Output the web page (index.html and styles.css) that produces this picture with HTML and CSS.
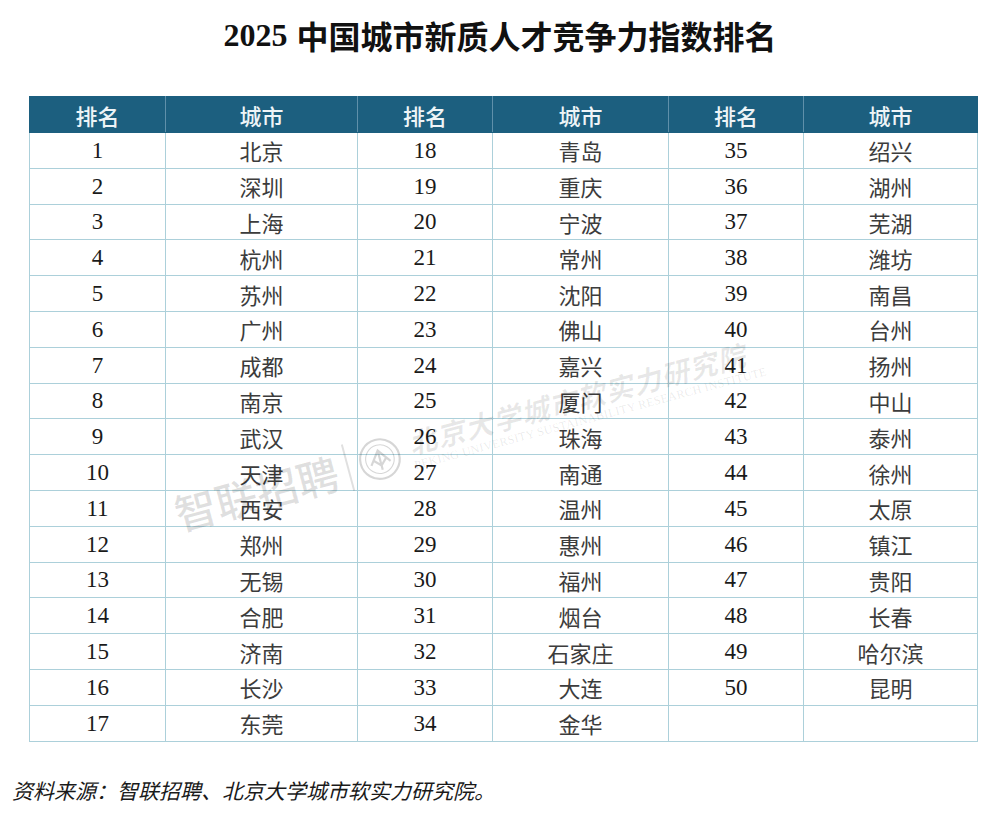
FILE: index.html
```html
<!DOCTYPE html>
<html lang="zh-CN">
<head>
<meta charset="utf-8">
<title>2025 中国城市新质人才竞争力指数排名</title>
<link rel="stylesheet" href="styles.css">
</head>
<body>
<div class="page">
  <h1 class="title"><span class="num">2025</span> 中国城市新质人才竞争力指数排名</h1>
  <div class="table-wrap">
    <table class="rank">
      <colgroup>
        <col class="c1"><col class="c2"><col class="c3"><col class="c4"><col class="c5"><col class="c6">
      </colgroup>
      <thead>
        <tr><th>排名</th><th>城市</th><th>排名</th><th>城市</th><th>排名</th><th>城市</th></tr>
      </thead>
      <tbody>
        <tr><td class="n">1</td><td>北京</td><td class="n">18</td><td>青岛</td><td class="n">35</td><td>绍兴</td></tr>
        <tr><td class="n">2</td><td>深圳</td><td class="n">19</td><td>重庆</td><td class="n">36</td><td>湖州</td></tr>
        <tr><td class="n">3</td><td>上海</td><td class="n">20</td><td>宁波</td><td class="n">37</td><td>芜湖</td></tr>
        <tr><td class="n">4</td><td>杭州</td><td class="n">21</td><td>常州</td><td class="n">38</td><td>潍坊</td></tr>
        <tr><td class="n">5</td><td>苏州</td><td class="n">22</td><td>沈阳</td><td class="n">39</td><td>南昌</td></tr>
        <tr><td class="n">6</td><td>广州</td><td class="n">23</td><td>佛山</td><td class="n">40</td><td>台州</td></tr>
        <tr><td class="n">7</td><td>成都</td><td class="n">24</td><td>嘉兴</td><td class="n">41</td><td>扬州</td></tr>
        <tr><td class="n">8</td><td>南京</td><td class="n">25</td><td>厦门</td><td class="n">42</td><td>中山</td></tr>
        <tr><td class="n">9</td><td>武汉</td><td class="n">26</td><td>珠海</td><td class="n">43</td><td>泰州</td></tr>
        <tr><td class="n">10</td><td>天津</td><td class="n">27</td><td>南通</td><td class="n">44</td><td>徐州</td></tr>
        <tr><td class="n">11</td><td>西安</td><td class="n">28</td><td>温州</td><td class="n">45</td><td>太原</td></tr>
        <tr><td class="n">12</td><td>郑州</td><td class="n">29</td><td>惠州</td><td class="n">46</td><td>镇江</td></tr>
        <tr><td class="n">13</td><td>无锡</td><td class="n">30</td><td>福州</td><td class="n">47</td><td>贵阳</td></tr>
        <tr><td class="n">14</td><td>合肥</td><td class="n">31</td><td>烟台</td><td class="n">48</td><td>长春</td></tr>
        <tr><td class="n">15</td><td>济南</td><td class="n">32</td><td>石家庄</td><td class="n">49</td><td>哈尔滨</td></tr>
        <tr><td class="n">16</td><td>长沙</td><td class="n">33</td><td>大连</td><td class="n">50</td><td>昆明</td></tr>
        <tr><td class="n">17</td><td>东莞</td><td class="n">34</td><td>金华</td><td class="n"></td><td></td></tr>
      </tbody>
    </table>
    <div class="watermark" aria-hidden="true">
      <span class="wm-zl">智联招聘</span>
      <span class="wm-bar"></span>
      <svg class="wm-logo" viewBox="0 0 40 40" width="44" height="44">
        <circle cx="20" cy="20" r="18" fill="none" stroke="currentColor" stroke-width="2"/>
        <circle cx="20" cy="20" r="13" fill="none" stroke="currentColor" stroke-width="1"/>
        <path d="M11 24 L20 12 L29 24 M20 12 L20 30 M14 20 L20 26 L26 20" fill="none" stroke="currentColor" stroke-width="2"/>
      </svg>
      <span class="wm-pku">
        <span class="wm-cn">北京大学城市软实力研究院</span>
        <span class="wm-en">PEKING UNIVERSITY SUSTAINABILITY RESEARCH INSTITUTE</span>
      </span>
    </div>
  </div>
  <p class="source">资料来源：智联招聘、北京大学城市软实力研究院。</p>
</div>
</body>
</html>
```

FILE: styles.css
```css
html, body {
  margin: 0;
  padding: 0;
  background: #ffffff;
}

.page {
  width: 1000px;
  height: 829px;
  overflow: hidden;
  font-family: "Noto Sans CJK SC", "Noto Sans", sans-serif;
}

.title {
  margin: 0;
  height: 76px;
  display: flex;
  align-items: center;
  justify-content: center;
  font-size: 32px;
  font-weight: 700;
  color: #111111;
  font-family: "Noto Sans CJK SC", sans-serif;
  padding-bottom: 6px;
  box-sizing: border-box;
}

.title .num {
  font-family: "Liberation Serif", serif;
  font-weight: 700;
  margin-right: 9px;
}

.table-wrap {
  position: relative;
  margin: 20px 0 0 29px;
  width: 948px;
}

.rank {
  width: 948px;
  border-collapse: collapse;
  table-layout: fixed;
}

.c1 { width: 136px; }
.c2 { width: 192px; }
.c3 { width: 135px; }
.c4 { width: 176px; }
.c5 { width: 135px; }
.c6 { width: 174px; }

.rank th {
  height: 35px;
  padding: 0;
  background: #1c5f7f;
  color: #eef4f7;
  font-family: "Noto Sans CJK SC", sans-serif;
  font-weight: 500;
  font-size: 22px;
  line-height: 1;
  text-align: center;
  border: 1px solid #1c5f7f;
  border-left-color: #5f90aa;
  border-right-color: #5f90aa;
}

.rank th:first-child { border-left-color: #1c5f7f; }
.rank th:last-child { border-right-color: #1c5f7f; }

.rank td {
  height: 34.8px;
  padding: 0;
  text-align: center;
  border: 1px solid #acd0da;
  font-family: "Noto Sans CJK SC", sans-serif;
  font-weight: 400;
  font-size: 22px;
  color: #3c3c3c;
  line-height: 1;
}

.rank td.n {
  font-family: "Liberation Serif", serif;
  color: #1a1a1a;
  font-size: 23px;
}

.watermark {
  position: absolute;
  left: 146px;
  top: 387px;
  display: flex;
  align-items: center;
  gap: 10px;
  transform: rotate(-15deg);
  transform-origin: left center;
  color: rgba(0, 0, 0, 0.12);
  pointer-events: none;
  white-space: nowrap;
}

.wm-zl {
  font-family: "Noto Sans CJK SC", sans-serif;
  font-weight: 500;
  font-size: 42px;
}

.wm-bar {
  width: 2px;
  height: 48px;
  background: rgba(0, 0, 0, 0.12);
}

.wm-logo {
  color: rgba(0, 0, 0, 0.16);
}

.wm-pku {
  display: flex;
  flex-direction: column;
  line-height: 1;
  color: rgba(0, 0, 0, 0.09);
}

.wm-cn {
  font-family: "Noto Sans CJK SC", sans-serif;
  font-style: italic;
  font-weight: 700;
  font-size: 28px;
  letter-spacing: 1px;
}

.wm-en {
  font-family: "Liberation Serif", serif;
  font-size: 12px;
  letter-spacing: 0.3px;
  margin-top: 3px;
}

.source {
  margin: 33px 0 0 12px;
  font-family: "Noto Sans CJK SC", sans-serif;
  font-style: italic;
  font-size: 21px;
  line-height: 30px;
  color: #1a1a1a;
}
```
